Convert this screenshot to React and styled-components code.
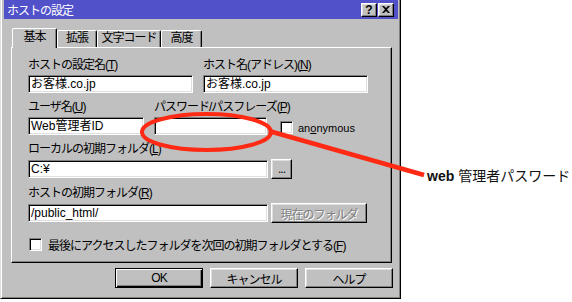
import React from "react";
import styled, { createGlobalStyle } from "styled-components";

const GlobalStyle = createGlobalStyle`
  html, body { margin: 0; padding: 0; background: #fff; }
  body { font-family: "Liberation Sans", "Noto Sans CJK JP", sans-serif; }
`;

const Page = styled.div`
  position: relative;
  display: flex;
  align-items: flex-start;
  width: 572px;
  height: 302px;
  overflow: hidden;
`;

const Dialog = styled.div`
  box-sizing: border-box;
  width: 401px;
  height: 299px;
  flex: none;
  display: flex;
  flex-direction: column;
  background: #c0c0c0;
  border-left: 1px solid #dfdfdf;
  border-right: 1px solid #000;
  border-bottom: 1px solid #000;
  box-shadow: inset 1px 0 #fff, inset -1px -1px #808080;
  padding: 0 2px 2px 3px;
`;

const TitleBar = styled.div`
  height: 19px;
  display: flex;
  align-items: center;
  justify-content: space-between;
  background: #5151c9;
  padding: 0 4px 0 3px;
  color: #fff;
  font-size: 12px;
  letter-spacing: -1px;
`;

const TitleButtons = styled.div`
  display: flex;
  gap: 1px;
`;

const TitleButton = styled.div`
  box-sizing: border-box;
  width: 16px;
  height: 14px;
  display: flex;
  align-items: center;
  justify-content: center;
  background: #c0c0c0;
  border-top: 1px solid #fff;
  border-left: 1px solid #fff;
  border-right: 1px solid #000;
  border-bottom: 1px solid #000;
  box-shadow: inset -1px -1px #808080, inset 1px 1px #dfdfdf;
  color: #000;
  font-weight: bold;
  font-size: 12px;
  letter-spacing: 0;
  line-height: 1;
`;

const TabRow = styled.div`
  display: flex;
  align-items: flex-end;
  height: 20px;
  margin: 9px 0 -1px 8px;
  position: relative;
  z-index: 1;
`;

const Tab = styled.div`
  box-sizing: border-box;
  width: ${(p) => p.$w}px;
  height: ${(p) => (p.$active ? 20 : 17)}px;
  margin-bottom: ${(p) => (p.$active ? 0 : 1)}px;
  background: #c0c0c0;
  border-top: 1px solid #fff;
  border-left: 1px solid #fff;
  border-right: 1px solid #000;
  border-radius: 2px 2px 0 0;
  box-shadow: inset -1px 0 #808080;
  font-size: 12px;
  letter-spacing: -1px;
  text-align: center;
  line-height: ${(p) => (p.$active ? 17 : 15)}px;
  color: #000;
`;

const Panel = styled.div`
  box-sizing: border-box;
  width: 381px;
  height: 216px;
  margin-left: 7px;
  border-top: 1px solid #fff;
  border-left: 1px solid #fff;
  border-right: 1px solid #000;
  border-bottom: 1px solid #000;
  box-shadow: inset -1px -1px #808080;
  padding: 10px 0 0 16px;
  display: flex;
  flex-direction: column;
  gap: 7px;
`;

const Row = styled.div`
  display: flex;
  align-items: flex-end;
  gap: ${(p) => p.$gap || 0}px;
`;

const Field = styled.div`
  display: flex;
  flex-direction: column;
  width: ${(p) => (p.$w ? `${p.$w}px` : "auto")};
`;

const Label = styled.div`
  height: 14px;
  line-height: 14px;
  margin-bottom: 3px;
  font-size: 12px;
  letter-spacing: -1px;
  color: #000;
  white-space: nowrap;
`;

const InputLine = styled.div`
  display: flex;
  align-items: center;
  gap: 3px;
`;

const Input = styled.div`
  box-sizing: border-box;
  width: ${(p) => p.$w}px;
  height: 18px;
  background: #fff;
  border-top: 1px solid #808080;
  border-left: 1px solid #808080;
  border-right: 1px solid #fff;
  border-bottom: 1px solid #fff;
  box-shadow: inset 1px 1px #000, inset -1px -1px #dfdfdf;
  padding: 0 2px;
  font-size: 12px;
  line-height: 16px;
  color: #000;
  white-space: nowrap;
  overflow: hidden;
`;

const Button = styled.div`
  box-sizing: border-box;
  width: ${(p) => p.$w}px;
  height: 20px;
  display: flex;
  align-items: center;
  justify-content: center;
  background: #c0c0c0;
  border-top: 1px solid ${(p) => (p.$default ? "#000" : "#fff")};
  border-left: 1px solid ${(p) => (p.$default ? "#000" : "#fff")};
  border-right: 1px solid #000;
  border-bottom: 1px solid #000;
  box-shadow: ${(p) =>
    p.$default
      ? "inset 1px 1px #fff, inset -1px -1px #000, inset -2px -2px #808080"
      : "inset -1px -1px #808080, inset 1px 1px #dfdfdf"};
  font-size: 12px;
  letter-spacing: -1px;
  color: ${(p) => (p.$disabled ? "#808080" : "#000")};
  text-shadow: ${(p) => (p.$disabled ? "1px 1px #fff" : "none")};
  white-space: nowrap;
`;

const CheckLine = styled.div`
  display: flex;
  align-items: center;
  gap: ${(p) => p.$gap}px;
  margin: ${(p) => p.$margin || "0"};
  font-size: 12px;
  letter-spacing: -1px;
  color: #000;
  white-space: nowrap;
`;

const Check = styled.div`
  box-sizing: border-box;
  width: 13px;
  height: 13px;
  flex: none;
  background: #fff;
  border-top: 1px solid #808080;
  border-left: 1px solid #808080;
  border-right: 1px solid #fff;
  border-bottom: 1px solid #fff;
  box-shadow: inset 1px 1px #000, inset -1px -1px #dfdfdf;
`;

const Latin = styled.span`
  font-family: "Liberation Sans", sans-serif;
  font-size: 11px;
  letter-spacing: 0;
`;

const Footer = styled.div`
  display: flex;
  justify-content: flex-end;
  gap: 7px;
  margin-top: 5px;
  padding-right: 5px;
`;

const Note = styled.div`
  margin: 166px 0 0 26px;
  font-size: 14px;
  line-height: 18px;
  color: #111;
  white-space: nowrap;
  font-family: "Noto Sans CJK JP", sans-serif;

  b {
    font-family: "Liberation Sans", sans-serif;
    font-weight: bold;
    margin-right: 4px;
  }
`;

const Overlay = styled.svg`
  position: absolute;
  left: 0;
  top: 0;
  pointer-events: none;
`;

const CloseIcon = () => (
  <svg width="8" height="7" viewBox="0 0 8 7">
    <path d="M0 0h2l2 2 2-2h2L5 3.5 8 7H6L4 5 2 7H0l3-3.5z" fill="#000" />
  </svg>
);

const tabs = [
  { label: "基本", w: 45, active: true },
  { label: "拡張", w: 40 },
  { label: "文字コード", w: 64 },
  { label: "高度", w: 41 },
];

export default function App() {
  return (
    <Page>
      <GlobalStyle />
      <Dialog>
        <TitleBar>
          <span>ホストの設定</span>
          <TitleButtons>
            <TitleButton>?</TitleButton>
            <TitleButton>
              <CloseIcon />
            </TitleButton>
          </TitleButtons>
        </TitleBar>

        <TabRow>
          {tabs.map((t) => (
            <Tab key={t.label} $w={t.w} $active={t.active}>
              {t.label}
            </Tab>
          ))}
        </TabRow>

        <Panel>
          <Row $gap={10}>
            <Field $w={165}>
              <Label>
                ホストの設定名(<u>T</u>)
              </Label>
              <Input $w={165}>お客様.co.jp</Input>
            </Field>
            <Field $w={165}>
              <Label>
                ホスト名(アドレス)(<u>N</u>)
              </Label>
              <Input $w={165}>お客様.co.jp</Input>
            </Field>
          </Row>

          <Row $gap={10}>
            <Field $w={116}>
              <Label>
                ユーザ名(<u>U</u>)
              </Label>
              <Input $w={116}>Web管理者ID</Input>
            </Field>
            <Field $w={113}>
              <Label>
                パスワード/パスフレーズ(<u>P</u>)
              </Label>
              <Input $w={113} />
            </Field>
            <CheckLine $gap={5} $margin="0 0 1px 3px">
              <Check />
              <Latin>
                an<u>o</u>nymous
              </Latin>
            </CheckLine>
          </Row>

          <Field>
            <Label>
              ローカルの初期フォルダ(<u>L</u>)
            </Label>
            <InputLine>
              <Input $w={240}>C:¥</Input>
              <Button $w={21}>...</Button>
            </InputLine>
          </Field>

          <Field>
            <Label>
              ホストの初期フォルダ(<u>R</u>)
            </Label>
            <InputLine>
              <Input $w={240}>/public_html/</Input>
              <Button $w={96} $disabled>
                現在のフォルダ
              </Button>
            </InputLine>
          </Field>

          <CheckLine $gap={6} $margin="6px 0 0 1px">
            <Check />
            <span>
              最後にアクセスしたフォルダを次回の初期フォルダとする(<u>F</u>)
            </span>
          </CheckLine>
        </Panel>

        <Footer>
          <Button $w={88} $default>
            OK
          </Button>
          <Button $w={88}>キャンセル</Button>
          <Button $w={88}>ヘルプ</Button>
        </Footer>
      </Dialog>

      <Note>
        <b>web</b>管理者パスワード
      </Note>

      <Overlay width="572" height="302" viewBox="0 0 572 302">
        <ellipse
          cx="206.5"
          cy="132"
          rx="64.5"
          ry="18"
          fill="none"
          stroke="#ff2a14"
          strokeWidth="4"
        />
        <line
          x1="269"
          y1="131"
          x2="424"
          y2="175"
          stroke="#ff2a14"
          strokeWidth="4.5"
        />
      </Overlay>
    </Page>
  );
}
